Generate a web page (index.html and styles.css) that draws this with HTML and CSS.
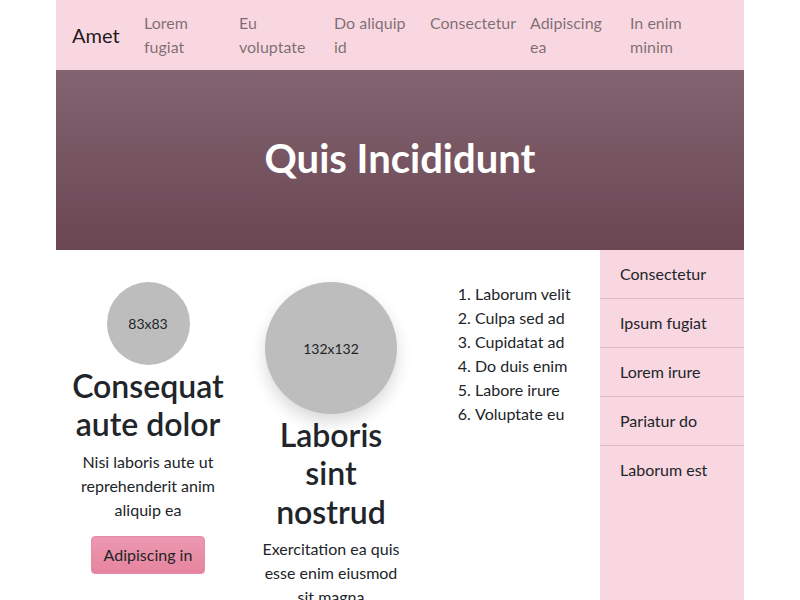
FILE: index.html
```html
<!DOCTYPE html>
<html lang="en">
<head>
<meta charset="utf-8">
<title>Amet</title>
<link rel="stylesheet" href="styles.css">
</head>
<body>
<div class="page">
  <nav class="navbar">
    <a class="brand" href="#">Amet</a>
    <ul class="nav">
      <li class="nav-item"><a href="#">Lorem fugiat</a></li>
      <li class="nav-item"><a href="#">Eu voluptate</a></li>
      <li class="nav-item"><a href="#">Do aliquip id</a></li>
      <li class="nav-item"><a href="#">Consectetur</a></li>
      <li class="nav-item"><a href="#">Adipiscing ea</a></li>
      <li class="nav-item"><a href="#">In enim minim</a></li>
    </ul>
  </nav>
  <header class="hero">
    <h1>Quis Incididunt</h1>
  </header>
  <div class="content">
    <main class="main">
      <section class="col col-1">
        <div class="avatar avatar-sm">83x83</div>
        <h2>Consequat aute dolor</h2>
        <p>Nisi laboris aute ut reprehenderit anim aliquip ea</p>
        <a class="btn" href="#">Adipiscing in</a>
      </section>
      <section class="col col-2">
        <div class="avatar avatar-lg">132x132</div>
        <h2>Laboris sint nostrud</h2>
        <p>Exercitation ea quis esse enim eiusmod sit magna</p>
      </section>
      <section class="col col-3">
        <ol class="list">
          <li>Laborum velit</li>
          <li>Culpa sed ad</li>
          <li>Cupidatat ad</li>
          <li>Do duis enim</li>
          <li>Labore irure</li>
          <li>Voluptate eu</li>
        </ol>
      </section>
    </main>
    <aside class="sidebar">
      <a class="side-item" href="#">Consectetur</a>
      <a class="side-item" href="#">Ipsum fugiat</a>
      <a class="side-item" href="#">Lorem irure</a>
      <a class="side-item" href="#">Pariatur do</a>
      <a class="side-item" href="#">Laborum est</a>
    </aside>
  </div>
</div>
</body>
</html>
```
FILE: styles.css
```css
* { box-sizing: border-box; }
html, body { margin: 0; padding: 0; }
body {
  font-family: "Segoe UI", Lato, "Noto Sans", sans-serif;
  font-size: 16px;
  line-height: 1.5;
  color: #212529;
  background: #fff;
  overflow: hidden;
}
a { text-decoration: none; color: inherit; }
.page {
  width: 688px;
  margin: 0 auto;
}
.navbar {
  display: flex;
  align-items: center;
  background: #f8d7e1;
  height: 70px;
  padding: 0 16px;
}
.brand {
  font-size: 20px;
  line-height: 30px;
  color: rgba(0,0,0,.9);
  width: 64px;
  flex-shrink: 0;
  white-space: nowrap;
}
.nav {
  list-style: none;
  margin: 0;
  padding: 0;
  display: grid;
  grid-template-columns: 95px 95px 96px 100px 100px 1fr;
  flex: 1;
}
.nav-item a {
  display: block;
  padding: 0 8px;
  color: rgba(0,0,0,.5);
}
.hero {
  height: 180px;
  background: linear-gradient(#826470, #6b4653);
  display: flex;
  align-items: center;
  justify-content: center;
  padding-bottom: 4px;
}
.hero h1 {
  margin: 0;
  color: #fff;
  font-size: 40px;
  font-weight: 700;
  line-height: 1.2;
}
.content {
  display: flex;
  height: 350px;
}
.main {
  flex: 1;
  display: grid;
  grid-template-columns: 184px 182px 1fr;
}
.col {
  padding: 32px 12px 0;
  text-align: center;
  display: flex;
  flex-direction: column;
  align-items: center;
}
.col-2 { padding-left: 16px; padding-right: 16px; }
.avatar {
  border-radius: 50%;
  background: #bdbdbd;
  display: flex;
  align-items: center;
  justify-content: center;
  font-size: 14px;
  color: #212529;
  flex-shrink: 0;
  margin-bottom: 2px;
}
.avatar-sm { width: 83px; height: 83px; }
.avatar-lg {
  width: 132px;
  height: 132px;
  box-shadow: 0 8px 16px rgba(0,0,0,.15);
}
.col h2 {
  margin: 0 0 6px;
  font-size: 32px;
  font-weight: 600;
  line-height: 1.2;
}
.col p {
  margin: 0 0 14px;
  line-height: 24px;
}
.btn {
  display: inline-block;
  padding: 6px 12px;
  border-radius: 4px;
  background: linear-gradient(#eb99b1, #e7849f);
  border: 1px solid #e68aa5;
  color: #212529;
  line-height: 24px;
}
.col-3 {
  text-align: left;
  align-items: stretch;
  padding-left: 13px;
}
.list {
  margin: 0;
  padding-left: 40px;
}
.sidebar {
  width: 144px;
  background: #f8d7e1;
  display: flex;
  flex-direction: column;
}
.side-item {
  display: block;
  padding: 12px 20px;
  line-height: 24px;
  border-bottom: 1px solid #dcbac5;
  color: #212529;
}
.side-item:last-child { border-bottom: none; }
```
